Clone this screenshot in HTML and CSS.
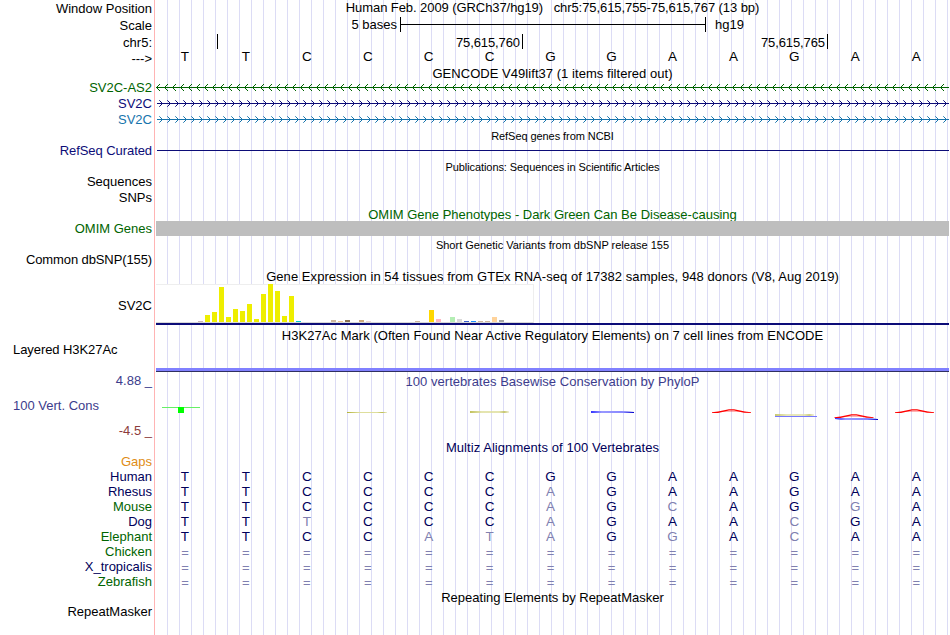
FILE: index.html
```html
<!DOCTYPE html>
<html lang="en">
<head>
  <meta charset="UTF-8">
  <title>chr5:75,615,755-75,615,767</title>
  <link rel="stylesheet" href="styles.css">
</head>
<body>
  <div class="browser">
    <div class="row h17"><div class="label">Window Position</div><div class="title t-window">Human Feb. 2009 (GRCh37/hg19) &nbsp; chr5:75,615,755-75,615,767 (13 bp)</div></div>
    <div class="row h17"><div class="label">Scale</div><div class="scale"><span class="scale-text">5 bases</span><span class="scale-bar"></span><span>hg19</span></div></div>
    <div class="row h16"><div class="label chrom">chr5:</div><div class="ruler"><span></span><span>75,615,760</span><span>75,615,765</span></div></div>
    <div class="row h16"><div class="label">---&gt;</div><div class="bases black" data-seq="TTCCCCGGAAGAA"></div></div>

    <div class="row h13"><div></div><div class="title t-gencode">GENCODE V49lift37 (1 items filtered out)</div></div>
    <div class="row h16 gene-as2"><div class="label">SV2C-AS2</div>
      <svg class="track" width="793" height="16"><defs><pattern id="left" width="8" height="16" patternUnits="userSpaceOnUse"><path d="M1 7.5h1M2 6.5h1M3 5.5h1M1 9.5h1M2 10.5h1M3 11.5h1M0 8.5h8" stroke="currentColor"/></pattern></defs><rect width="793" height="16" fill="url(#left)"/></svg></div>
    <div class="row h16 gene-a"><div class="label">SV2C</div>
      <svg class="track" width="793" height="16"><defs><pattern id="right" width="8" height="16" patternUnits="userSpaceOnUse"><path d="M4 6.5h1M5 7.5h1M5 9.5h1M4 10.5h1M0 8.5h8" stroke="currentColor"/><path d="M3 5.5h1M3 11.5h1" stroke="currentColor" opacity=".7"/></pattern></defs><rect x="1" width="792" height="16" fill="url(#right)"/></svg></div>
    <div class="row h16 gene-b"><div class="label">SV2C</div>
      <svg class="track" width="793" height="16"><defs><pattern id="right2" width="8" height="16" patternUnits="userSpaceOnUse"><path d="M4 6.5h1M5 7.5h1M5 9.5h1M4 10.5h1M0 8.5h8" stroke="currentColor"/><path d="M3 5.5h1M3 11.5h1" stroke="currentColor" opacity=".7"/></pattern></defs><rect x="1" width="792" height="16" fill="url(#right2)"/></svg></div>

    <div class="row h16"><div></div><div class="title small t-refseq">RefSeq genes from NCBI</div></div>
    <div class="row h15 navy"><div class="label up t-curated">RefSeq Curated</div><div class="refseq"></div></div>
    <div class="row h16"><div></div><div class="title small t-pubs">Publications: Sequences in Scientific Articles</div></div>
    <div class="row h16"><div class="label up">Sequences</div></div>
    <div class="row h16"><div class="label up">SNPs</div></div>
    <div class="row h15 omim"><div></div><div class="title t-omim">OMIM Gene Phenotypes - Dark Green Can Be Disease-causing</div></div>
    <div class="row h15 omim"><div class="label up">OMIM Genes</div><div class="omim-bar"></div></div>
    <div class="row h16"><div></div><div class="title small">Short Genetic Variants from dbSNP release 155</div></div>
    <div class="row h16"><div class="label up t-common">Common dbSNP(155)</div></div>

    <div class="row h16"><div></div><div class="title t-gtex">Gene Expression in 54 tissues from GTEx RNA-seq of 17382 samples, 948 donors (V8, Aug 2019)</div></div>
    <div class="row gtex"><div class="label">SV2C</div><div class="gtex-track"><div class="gtex-bars" id="gtex"></div></div></div>

    <div class="row h17 h3k-title"><div></div><div class="title t-h3k">H3K27Ac Mark (Often Found Near Active Regulatory Elements) on 7 cell lines from ENCODE</div></div>
    <div class="row h3k"><div class="label up left t-layered">Layered H3K27Ac</div><div class="h3k-bar"></div></div>

    <div class="row h18 cons"><div class="label limit">4.88 _</div><div class="title t-cons">100 vertebrates Basewise Conservation by PhyloP</div></div>
    <div class="row wiggle cons">
      <div class="wiggle-labels"><div class="label left">100 Vert. Cons</div><div class="label min">-4.5 _</div></div>
      <svg class="track" width="793" height="50" viewBox="156 390 793 50">
        <defs>
          <g id="up"><path d="M0 3.9V3.2L6 2.6L17 0.2H22L33 2.6L39 3.3V3.9L32 3.7L22 1.4H17L6 3.9Z" fill="red"/><path d="M11 2.5h17" stroke="red" stroke-width=".6" opacity=".5"/></g>
          <linearGradient id="olive"><stop offset="0" stop-color="#b2b233"/><stop offset=".3" stop-color="#dede9c"/><stop offset=".75" stop-color="#dede9c"/><stop offset=".88" stop-color="#bcbc50"/><stop offset="1" stop-color="#efefcf"/></linearGradient>
          <linearGradient id="blue"><stop offset="0" stop-color="#3333ff"/><stop offset=".25" stop-color="#9999ff"/><stop offset=".75" stop-color="#8888ff"/><stop offset="1" stop-color="#0000cc"/></linearGradient>
        </defs>
        <path d="M162 407.5h38" stroke="#66f066"/><rect x="178" y="407" width="6" height="6" fill="#0f0"/>
        <rect x="347" y="412" width="40" height="1" fill="url(#olive)"/>
        <rect x="470" y="411" width="39" height="2" fill="url(#olive)" opacity=".8"/>
        <path d="M591 411H622L634 412V413H591Z" fill="url(#blue)"/>
        <use href="#up" x="712" y="409"/>
        <rect x="775" y="414" width="39" height="2" fill="url(#olive)" opacity=".7"/><path d="M775 416.5h42" stroke="#7777ff"/>
        <path d="M835 418H867L878 419V420H841L835 419Z" fill="url(#blue)"/><use href="#up" x="834.500" y="414"/>
        <use href="#up" x="895" y="409"/>
      </svg>
    </div>

    <div class="row h15 multiz"><div></div><div class="title t-multiz">Multiz Alignments of 100 Vertebrates</div></div>
    <div class="alignments">
      <div class="row h15 gaps"><div class="label">Gaps</div></div>
      <div class="row h15"><div class="label blue">Human</div><div class="bases" data-seq="TTCCCCGGAAGAA"></div></div>
      <div class="row h15"><div class="label blue">Rhesus</div><div class="bases" data-seq="TTCCCCaGAAGAA"></div></div>
      <div class="row h15"><div class="label green">Mouse</div><div class="bases" data-seq="TTCCCCaGcAGgA"></div></div>
      <div class="row h15"><div class="label blue">Dog</div><div class="bases" data-seq="TTtCCCaGAAcGA"></div></div>
      <div class="row h15"><div class="label green">Elephant</div><div class="bases" data-seq="TTCCataGgAcAA"></div></div>
      <div class="row h15"><div class="label green">Chicken</div><div class="bases" data-seq="============="></div></div>
      <div class="row h15"><div class="label blue">X_tropicalis</div><div class="bases" data-seq="============="></div></div>
      <div class="row h15"><div class="label green">Zebrafish</div><div class="bases" data-seq="============="></div></div>
    </div>

    <div class="row h15"><div></div><div class="title t-repeat">Repeating Elements by RepeatMasker</div></div>
    <div class="row h15"><div class="label repeat">RepeatMasker</div></div>
  </div>

  <script>
    // lower case bases differ from human and are drawn lighter
    document.querySelectorAll('.bases').forEach(function (row) {
      for (const base of row.dataset.seq) {
        const cell = document.createElement('span');
        cell.textContent = base.toUpperCase();
        if (base === '=') cell.className = 'gap';
        else if (base !== base.toUpperCase()) cell.className = 'diff';
        row.appendChild(cell);
      }
    });

    // tissue index: [height, color]
    const tissues = {
      6: [1, '#cdb7b5'], 7: [7], 8: [10], 9: [35], 10: [5], 11: [13], 12: [11], 13: [18],
      14: [3], 15: [28], 16: [38], 17: [31], 18: [6], 19: [26], 20: [1, '#00cdcd'],
      25: [2, '#cdb79e'], 26: [1, '#eec591'], 27: [2, '#8b7355'], 29: [2, '#cdaa7d'],
      30: [1, '#eed5d2'], 37: [1, '#cdb79e'], 39: [12, '#ffd700'], 40: [3, '#ffb6c1'],
      42: [5, '#b4eeb4'], 43: [3, '#d9d9d9'], 44: [1, '#3a5fcd'], 45: [1, '#1e90ff'],
      46: [1, '#cdb79e'], 47: [1, '#cdb79e'], 48: [5, '#ffd39b'], 49: [2, '#a6a6a6']
    };
    for (let i = 0; i < 54; i++) {
      const bar = document.createElement('i');
      const t = tissues[i] || [0];
      bar.style.height = t[0] + 'px';
      bar.style.backgroundColor = t[1] || '#eeee00';
      document.getElementById('gtex').appendChild(bar);
    }
  </script>
</body>
</html>
```
FILE: styles.css
```css
body { margin: 0; background: #fff; color: #000; font: 13px/15px "Liberation Sans", Arial, sans-serif; overflow: hidden; }
.browser {
  width: 949px; height: 635px;
  background:
    linear-gradient(#ffb4b4, #ffb4b4) 154px 0 / 1px 100% no-repeat,
    repeating-linear-gradient(to right, #dcdcf5 0 1px, transparent 1px 12px) 167px 0 / 782px 100% no-repeat;
}
.row { display: grid; grid-template-columns: 156px 793px; white-space: pre; }
.h13 { height: 13px; }
.h15 { height: 15px; }
.h16 { height: 16px; }
.h17 { height: 17px; }
.h18 { height: 18px; }
.label { text-align: right; padding: 1px 4px 0 0; }
.label.up { padding-top: 0; }
.label.left { text-align: left; padding-left: 13px; }
.title { text-align: center; }
.small { font-size: 11px; padding-top: 2px; }
.track { display: block; }

.t-window { letter-spacing: -0.075px; }
.t-gencode, .t-cons, .t-h3k { letter-spacing: 0.045px; }
.t-refseq { letter-spacing: -0.07px; }
.t-pubs { letter-spacing: -0.08px; }
.t-omim, .t-gtex { padding-top: 1px; }
.t-gtex { letter-spacing: 0.06px; }
.t-cons { padding-top: 2px; }
.t-multiz { letter-spacing: 0.06px; }
.t-common { letter-spacing: -0.11px; }
.t-curated, .t-layered { letter-spacing: -0.07px; }

.scale { display: flex; }
.scale-text { width: 241px; text-align: right; }
.scale-bar { width: 304px; height: 15px; margin: 0 9px 0 3px; border: solid #000; border-width: 0 1px; background: linear-gradient(#000, #000) 0 7px / 100% 1px no-repeat; }
.ruler { display: flex; letter-spacing: -0.1px; }
.ruler span { box-sizing: border-box; width: 305px; height: 15px; padding: 1px 2px 0 0; border-right: 1px solid #000; text-align: right; }
.ruler span:first-child { width: 62px; }

.bases { display: grid; grid-template-columns: repeat(13, 60.95px); margin-left: -1.5px; font-size: 13.5px; line-height: 14px; text-align: center; color: #00005a; }
.bases.black { color: #000; }
.bases .diff { color: #8080b0; }
.bases .gap { color: #8080b0; padding-top: 1px; font-size: 13px; }

.gene-as2 { color: #006400; }
.gene-a { color: #0c0c78; }
.gene-b { color: #1674ac; }
.navy { color: #0c0c78; }
.refseq { height: 1px; margin: 7px 0 0 1px; background: #0c0c78; }
.omim { color: #006400; }
.omim-bar { background: #bebebe; }

.gtex { height: 41px; }
.gtex .label { padding-top: 14px; }
.gtex-track { border-bottom: 2px solid #0c0c78; }
.gtex-bars { box-sizing: border-box; display: flex; align-items: flex-end; gap: 2px; width: 378px; height: 39px; background: #fff; border: solid #eee; border-width: 1px 1px 1px 0; border-bottom-color: #d8d8d8; }
.gtex-bars i { flex: 0 0 5px; }

.h3k-title .title { padding-top: 3px; }
.h3k { height: 30px; }
.h3k-bar { height: 3px; margin-top: 26px; background: #8080ff; border-bottom: 1px solid #303060; }

.cons { color: #3c3c8c; }
.wiggle { height: 50px; }
.wiggle-labels { display: flex; flex-direction: column; justify-content: space-between; }
.wiggle .left { padding-top: 8px; }
.wiggle .min { color: #8c3c3c; padding-bottom: 2px; }
.multiz, .blue { color: #00005a; }
.alignments .label, .repeat { margin-top: -2px; }
.gaps { color: #e08c14; }
.green { color: #006400; }
```
